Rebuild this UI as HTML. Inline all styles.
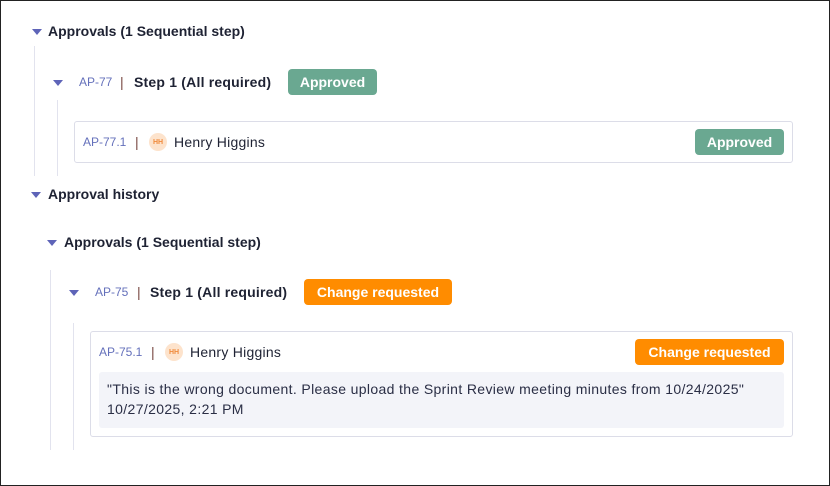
<!DOCTYPE html>
<html><head><style>
*{margin:0;padding:0;box-sizing:border-box}
body{width:830px;height:486px;background:#fff;font-family:"Liberation Sans",sans-serif;color:#1e2233;position:relative;overflow:hidden}
.frame{position:absolute;left:0;top:0;width:830px;height:486px;border:1px solid #222}
.a{position:absolute;white-space:nowrap;line-height:1}
.tri{position:absolute;width:0;height:0;border-left:5px solid transparent;border-right:5px solid transparent;border-top:6px solid #5e64b8}
.h{font-size:14px;font-weight:bold;color:#1e2233}
.id{font-size:12px;color:#6470bb}
.bar{font-size:14px;color:#7a4a44}
.vl{position:absolute;width:1px;background:#e2e3ee}
.card{position:absolute;border:1px solid #dcdde8;border-radius:3px;background:#fff}
.badge{position:absolute;border-radius:4px;color:#fff;font-weight:bold;font-size:14px;display:flex;align-items:center;justify-content:center}
.g{background:#6aa891}.o{background:#ff8c00}
.av{position:absolute;width:18px;height:18px;border-radius:50%;background:#fde3cc;color:#f08a3c;font-size:7px;font-weight:bold;display:flex;align-items:center;justify-content:center}
.nm{font-size:14px;color:#1e2233;letter-spacing:0.25px}
</style></head><body>
<div class="frame"></div>

<div class="tri" style="left:32px;top:29px"></div>
<div class="a h" style="left:48px;top:24px">Approvals (1 Sequential step)</div>
<div class="vl" style="left:34px;top:46px;height:130px"></div>

<div class="tri" style="left:53px;top:80px"></div>
<div class="a id" style="left:79px;top:76px">AP-77</div>
<div class="a bar" style="left:120px;top:75px">|</div>
<div class="a h" style="left:134px;top:75px;letter-spacing:0.2px">Step 1 (All required)</div>
<div class="badge g" style="left:288px;top:69px;width:89px;height:26px">Approved</div>
<div class="vl" style="left:57px;top:100px;height:76px"></div>

<div class="card" style="left:74px;top:121px;width:719px;height:42px"></div>
<div class="a id" style="left:83px;top:136px">AP-77.1</div>
<div class="a bar" style="left:135px;top:135px">|</div>
<div class="av" style="left:149px;top:133px">HH</div>
<div class="a nm" style="left:174px;top:135px">Henry Higgins</div>
<div class="badge g" style="left:695px;top:129px;width:89px;height:26px">Approved</div>

<div class="tri" style="left:31px;top:192px"></div>
<div class="a h" style="left:48px;top:187px">Approval history</div>

<div class="tri" style="left:47px;top:240px"></div>
<div class="a h" style="left:64px;top:235px">Approvals (1 Sequential step)</div>
<div class="vl" style="left:50px;top:270px;height:180px"></div>

<div class="tri" style="left:69px;top:290px"></div>
<div class="a id" style="left:95px;top:286px">AP-75</div>
<div class="a bar" style="left:137px;top:285px">|</div>
<div class="a h" style="left:150px;top:285px;letter-spacing:0.2px">Step 1 (All required)</div>
<div class="badge o" style="left:304px;top:279px;width:148px;height:26px">Change requested</div>
<div class="vl" style="left:73px;top:323px;height:127px"></div>

<div class="card" style="left:90px;top:331px;width:703px;height:106px"></div>
<div class="a id" style="left:99px;top:346px">AP-75.1</div>
<div class="a bar" style="left:151px;top:345px">|</div>
<div class="av" style="left:165px;top:343px">HH</div>
<div class="a nm" style="left:190px;top:345px">Henry Higgins</div>
<div class="badge o" style="left:635px;top:339px;width:149px;height:26px">Change requested</div>
<div style="position:absolute;left:99px;top:372px;width:685px;height:56px;background:#f3f4f9;border-radius:3px"></div>
<div class="a" style="left:107px;top:382px;font-size:14px;color:#2a2e45;letter-spacing:0.36px">"This is the wrong document. Please upload the Sprint Review meeting minutes from 10/24/2025"</div>
<div class="a" style="left:107px;top:402px;font-size:14px;color:#2a2e45;letter-spacing:0.36px">10/27/2025, 2:21 PM</div>
</body></html>
